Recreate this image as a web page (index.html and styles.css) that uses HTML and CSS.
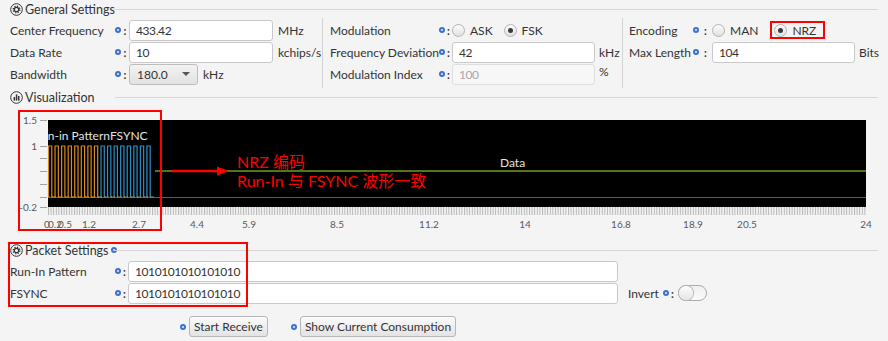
FILE: index.html
```html
<!DOCTYPE html>
<html>
<head>
    <meta charset="UTF-8">
    <title>Radio Settings</title>
    <link rel="stylesheet" href="styles.css">
</head>
<body>
    <!-- General settings -->
    <div class="section-head">
        <svg class="sec-icon" width="13" height="13" viewBox="0 0 13 13">
            <circle cx="6.5" cy="6.5" r="5.8" fill="none" stroke="#333" stroke-width="1"/>
            <circle cx="6.5" cy="6.5" r="3.3" fill="none" stroke="#333" stroke-width="1.3" stroke-dasharray="1.3 1.3"/>
            <circle cx="6.5" cy="6.5" r="2.2" fill="none" stroke="#333" stroke-width="1.2"/>
        </svg>
        <span class="sec-title">General Settings</span>
        <span class="sec-line"></span>
    </div>

    <div class="general">
        <div class="col col-1">
            <div class="row">
                <span class="label">Center Frequency</span><span class="info"></span><span class="colon">:</span>
                <input class="field" type="text" value="433.42"><span class="unit">MHz</span>
            </div>
            <div class="row">
                <span class="label">Data Rate</span><span class="info"></span><span class="colon">:</span>
                <input class="field" type="text" value="10"><span class="unit">kchips/s</span>
            </div>
            <div class="row">
                <span class="label">Bandwidth</span><span class="info"></span><span class="colon">:</span>
                <div class="select"><span>180.0</span><span class="caret"></span></div><span class="unit">kHz</span>
            </div>
        </div>

        <div class="col col-2">
            <div class="row">
                <span class="label">Modulation</span><span class="info"></span><span class="colon">:</span>
                <span class="radio"><span class="dot"></span>ASK</span>
                <span class="radio checked"><span class="dot"></span>FSK</span>
            </div>
            <div class="row">
                <span class="label">Frequency Deviation</span><span class="info"></span><span class="colon">:</span>
                <input class="field" type="text" value="42"><span class="unit">kHz</span>
            </div>
            <div class="row">
                <span class="label">Modulation Index</span><span class="info"></span><span class="colon">:</span>
                <input class="field" type="text" value="100" disabled><span class="unit pct">%</span>
            </div>
        </div>

        <div class="col col-3">
            <div class="row">
                <span class="label">Encoding</span><span class="info"></span><span class="colon">:</span>
                <span class="radio"><span class="dot"></span>MAN</span>
                <span class="radio checked marked"><span class="dot"></span>NRZ</span>
            </div>
            <div class="row">
                <span class="label">Max Length</span><span class="info"></span><span class="colon">:</span>
                <input class="field" type="text" value="104"><span class="unit">Bits</span>
            </div>
        </div>
    </div>

    <!-- Visualization -->
    <div class="section-head">
        <svg class="sec-icon" width="13" height="13" viewBox="0 0 13 13">
            <circle cx="6.5" cy="6.5" r="5.8" fill="none" stroke="#333" stroke-width="1"/>
            <rect x="3.6" y="6" width="1.5" height="3.6" fill="#333"/>
            <rect x="5.8" y="3.4" width="1.5" height="6.2" fill="#333"/>
            <rect x="8" y="5" width="1.5" height="4.6" fill="#333"/>
        </svg>
        <span class="sec-title">Visualization</span>
        <span class="sec-line"></span>
    </div>

    <div class="chart">
        <svg width="888" height="135" viewBox="0 0 888 135">
            <defs>
                <clipPath id="plotClip"><rect x="48" y="14" width="818" height="87"/></clipPath>
                <pattern id="ticks" x="48" y="0" width="2.6" height="8" patternUnits="userSpaceOnUse">
                    <line x1="0.5" y1="0" x2="0.5" y2="8" stroke="#b4b4b4" stroke-width="1"/>
                </pattern>
            </defs>

            <rect x="48" y="14" width="818" height="87" fill="#000"/>

            <!-- y axis -->
            <g stroke="#a0a0a0" stroke-width="1">
                <line x1="40" y1="14.5" x2="47" y2="14.5"/>
                <line x1="40" y1="40.5" x2="47" y2="40.5"/>
                <line x1="40" y1="52.5" x2="47" y2="52.5"/>
                <line x1="40" y1="65.5" x2="47" y2="65.5"/>
                <line x1="40" y1="78.5" x2="47" y2="78.5"/>
                <line x1="40" y1="91.5" x2="47" y2="91.5"/>
                <line x1="40" y1="101.5" x2="47" y2="101.5"/>
            </g>
            <g class="axis-label" text-anchor="end">
                <text x="37" y="18">1.5</text>
                <text x="37" y="44">1</text>
                <text x="37" y="105">-0.2</text>
            </g>

            <!-- x axis -->
            <rect x="48" y="101" width="819" height="8" fill="url(#ticks)"/>
            <g class="axis-label" text-anchor="middle">
                <text x="47" y="122">0</text>
                <text x="55" y="122">0.2</text>
                <text x="65" y="122">0.5</text>
                <text x="89" y="122">1.2</text>
                <text x="139" y="122">2.7</text>
                <text x="197" y="122">4.4</text>
                <text x="249" y="122">5.9</text>
                <text x="337" y="122">8.5</text>
                <text x="429" y="122">11.2</text>
                <text x="525" y="122">14</text>
                <text x="621" y="122">16.8</text>
                <text x="693" y="122">18.9</text>
                <text x="747" y="122">20.5</text>
                <text x="866" y="122">24</text>
            </g>

            <!-- series -->
            <line x1="48" y1="91.5" x2="866" y2="91.5" stroke="#5c5c5c" stroke-width="1"/>
            <line x1="155" y1="65" x2="866" y2="65" stroke="#6e9c22" stroke-width="1.6"/>
            <path fill="none" stroke="#d88a1c" stroke-width="1.2"
                  d="M48.5,91 v-51 h3.28 v51 h3.28 v-51 h3.28 v51 h3.28 v-51 h3.28 v51 h3.28 v-51 h3.28 v51 h3.28 v-51 h3.28 v51 h3.28 v-51 h3.28 v51 h3.28 v-51 h3.28 v51 h3.28 v-51 h3.28 v51 h3.28"/>
            <path fill="none" stroke="#2b90c8" stroke-width="1.2"
                  d="M101,91 v-51 h3.28 v51 h3.28 v-51 h3.28 v51 h3.28 v-51 h3.28 v51 h3.28 v-51 h3.28 v51 h3.28 v-51 h3.28 v51 h3.28 v-51 h3.28 v51 h3.28 v-51 h3.28 v51 h3.28 v-51 h3.28 v51 h3.28"/>
            <line x1="48.5" y1="91" x2="154" y2="91" stroke="#d88a1c" stroke-width="1.4" stroke-dasharray="1 2.28"/>

            <g class="series-label" clip-path="url(#plotClip)">
                <text x="110" y="34" text-anchor="end">Run-in Pattern</text>
                <text x="110" y="34">FSYNC</text>
            </g>
            <text class="series-label" x="500" y="61">Data</text>

            <!-- annotation -->
            <line x1="172" y1="65" x2="220" y2="65" stroke="#f00" stroke-width="2.5"/>
            <polygon points="217,60.5 229,65 217,69.5" fill="#f00"/>
            <text class="note" x="237" y="62">NRZ 编码</text>
            <text class="note" x="237" y="81">Run-In 与 FSYNC 波形一致</text>
        </svg>
        <div class="mark-box chart-mark"></div>
    </div>

    <!-- Packet settings -->
    <div class="packet">
        <div class="section-head">
            <svg class="sec-icon" width="13" height="13" viewBox="0 0 13 13">
                <circle cx="6.5" cy="6.5" r="5.8" fill="none" stroke="#333" stroke-width="1"/>
                <circle cx="6.5" cy="6.5" r="3.3" fill="none" stroke="#333" stroke-width="1.3" stroke-dasharray="1.3 1.3"/>
                <circle cx="6.5" cy="6.5" r="2.2" fill="none" stroke="#333" stroke-width="1.2"/>
            </svg>
            <span class="sec-title">Packet Settings<span class="info head-info"></span></span>
            <span class="sec-line"></span>
        </div>
        <div class="packet-rows">
            <div class="row">
                <span class="label">Run-In Pattern</span><span class="info"></span><span class="colon">:</span>
                <input class="field wide" type="text" value="1010101010101010">
            </div>
            <div class="row">
                <span class="label">FSYNC</span><span class="info"></span><span class="colon">:</span>
                <input class="field wide" type="text" value="1010101010101010">
                <span class="invert">Invert</span><span class="info"></span><span class="colon">:</span>
                <span class="toggle"><span class="knob"></span></span>
            </div>
        </div>
        <div class="mark-box packet-mark"></div>
    </div>

    <div class="actions">
        <span class="info"></span><button class="btn">Start Receive</button>
        <span class="info second"></span><button class="btn">Show Current Consumption</button>
    </div>
</body>
</html>
```

FILE: styles.css
```css
body {
    margin: 0;
    background-color: #f4f4f4;
    color: #333;
    font-family: Lato, "Noto Sans", sans-serif;
    font-size: 12px;
}

/* section headers */
.section-head {
    display: flex;
    align-items: center;
    height: 18px;
    padding-left: 10px;
    white-space: nowrap;
}

.sec-icon {
    flex: none;
    margin-right: 2px;
}

.sec-title {
    flex: none;
    display: flex;
    align-items: center;
    width: 90px;
    font-size: 12.5px;
}

.sec-line {
    flex: 1;
    height: 1px;
    margin-right: 10px;
    background-color: #d6d6d6;
}

/* general settings */
.general {
    display: flex;
    height: 70px;
}

.col {
    box-sizing: border-box;
    padding-top: 1px;
}

.col-1 {
    width: 322px;
    padding-left: 10px;
}

.col-2 {
    width: 300px;
    padding-left: 7px;
    border-left: 1px solid #d4d4d4;
}

.col-3 {
    flex: 1;
    padding-left: 6px;
    border-left: 1px solid #d4d4d4;
}

.row {
    display: flex;
    align-items: center;
    height: 22px;
    white-space: nowrap;
}

.label {
    flex: none;
    width: 105px;
}

.col-2 .label {
    width: 109px;
}

.col-3 .label {
    width: 64px;
}

.info {
    flex: none;
    width: 6px;
    height: 6px;
    border-radius: 50%;
    background: radial-gradient(circle, #b9d0f5 0 1px, #3b6fcf 1.6px);
}

.colon {
    flex: none;
    width: 8px;
    text-align: center;
    font-weight: bold;
    font-size: 11px;
}

.col-2 .colon {
    width: 7px;
}

.col-3 .colon {
    width: 13px;
}

.field {
    box-sizing: border-box;
    width: 144px;
    height: 21px;
    margin: 0;
    padding: 0 6px;
    border: 1px solid #c9c9c9;
    border-radius: 3px;
    background-color: #fff;
    color: #333;
    font-family: inherit;
    font-size: 12px;
    letter-spacing: -0.4px;
}

.field:disabled {
    background-color: #f7f7f7;
    border-color: #dedede;
    color: #a8a8a8;
}

.col-2 .field,
.col-3 .field {
    width: 143px;
}

.unit {
    margin-left: 5px;
}

.col-2 .unit,
.col-3 .unit {
    margin-left: 4px;
}

.unit.pct {
    align-self: flex-start;
    margin-top: 1px;
}

.select {
    box-sizing: border-box;
    display: flex;
    align-items: center;
    width: 69px;
    height: 21px;
    padding-left: 7px;
    border: 1px solid #bdbdbd;
    border-radius: 3px;
    background: linear-gradient(#f3f3f3, #e2e2e2);
}

.select span:first-child {
    flex: 1;
}

.caret {
    width: 0;
    height: 0;
    margin-right: 7px;
    border-left: 4px solid transparent;
    border-right: 4px solid transparent;
    border-top: 4px solid #555;
}

/* radio buttons */
.radio {
    display: flex;
    align-items: center;
    margin-right: 11px;
}

.col-3 .radio {
    margin-right: 16px;
}

.radio .dot {
    box-sizing: border-box;
    width: 13px;
    height: 13px;
    margin-right: 5px;
    border: 1px solid #b3b3b3;
    border-radius: 50%;
    background: linear-gradient(#fdfdfd, #e0e0e0);
    display: flex;
    align-items: center;
    justify-content: center;
}

.radio.checked .dot::after {
    content: "";
    width: 5px;
    height: 5px;
    border-radius: 50%;
    background-color: #3a3a3a;
}

.col-3 .radio.marked {
    box-sizing: border-box;
    height: 18px;
    margin-left: -4px;
    padding: 0 7px 0 2px;
    border: 2px solid #f00;
}

/* chart */
.chart {
    position: relative;
    height: 135px;
}

.chart svg {
    display: block;
}

.axis-label text {
    font-family: Lato, "Noto Sans", sans-serif;
    font-size: 10px;
    fill: #5a5a5a;
}

.series-label,
.series-label text {
    font-family: Lato, "Noto Sans", sans-serif;
    font-size: 12px;
    fill: #e4e4e4;
}

.note {
    font-family: Lato, "Noto Sans CJK SC", sans-serif;
    font-size: 16px;
    fill: #f00;
}

.mark-box {
    position: absolute;
    border: 2px solid #f00;
}

.chart-mark {
    left: 18px;
    top: 4px;
    width: 140px;
    height: 117px;
}

/* packet settings */
.packet {
    position: relative;
}

.packet .sec-title {
    width: 90px;
}

.head-info {
    margin-left: 2px;
}

.packet-rows {
    padding-top: 1px;
    padding-left: 10px;
}

.field.wide {
    width: 490px;
}

.invert {
    margin-left: 10px;
    margin-right: 4px;
}

.packet-rows .row .colon {
    width: 7px;
}

.toggle {
    box-sizing: border-box;
    position: relative;
    width: 29px;
    height: 16px;
    margin-left: 2px;
    border: 1px solid #aaa;
    border-radius: 8px;
    background: linear-gradient(#f0f0f0, #fafafa);
}

.knob {
    position: absolute;
    left: 0;
    top: 0;
    width: 14px;
    height: 14px;
    border-radius: 50%;
    background: linear-gradient(#fdfdfd, #e6e6e6);
    box-shadow: 0 0 0 1px #b5b5b5;
}

.packet-mark {
    left: 8px;
    top: 1px;
    width: 236px;
    height: 61px;
}

.actions {
    display: flex;
    align-items: center;
    margin-top: 12px;
    padding-left: 180px;
}

.actions .info {
    margin-right: 3px;
}

.actions .info.second {
    margin-left: 23px;
}

.btn {
    height: 21px;
    padding: 0 4px;
    border: 1px solid #b7b7b7;
    border-radius: 3px;
    background: linear-gradient(#fbfbfb, #e3e3e3);
    color: #333;
    font-family: inherit;
    font-size: 12px;
}
```
